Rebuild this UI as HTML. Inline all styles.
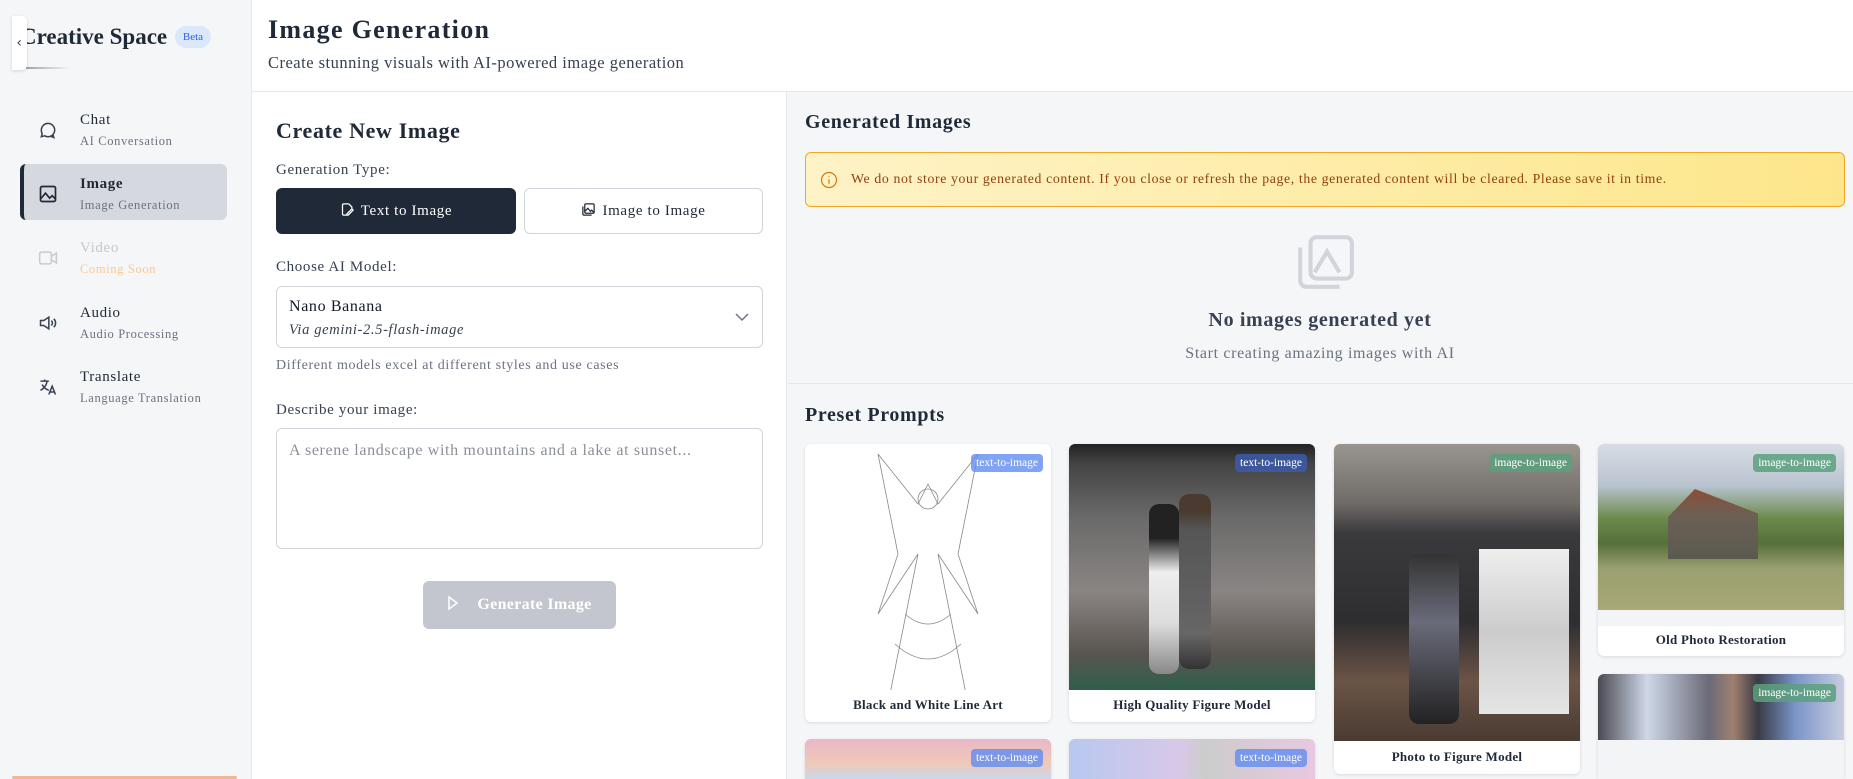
<!DOCTYPE html>
<html style="width:1853px;height:779px;overflow:hidden"><head><meta charset="utf-8"><style>
*{box-sizing:border-box;margin:0;padding:0}
body{width:1853px;height:779px;overflow:hidden;background:#f5f6f8;font-family:"Liberation Serif",Georgia,serif;color:#1f2937;position:relative;letter-spacing:.04em}
.abs{position:absolute}
#side{left:0;top:0;width:252px;height:779px;background:#f5f6f8;border-right:1px solid #e5e7eb}
#hdr{left:252px;top:0;width:1601px;height:92px;background:#fff;border-bottom:1px solid #e5e7eb}
#left{left:252px;top:92px;width:535px;height:687px;background:#fff;border-right:1px solid #e5e7eb}
.nav{position:absolute;left:0;width:252px}
.nav .t{position:absolute;left:80px;font-size:15px;color:#1f2937}
.nav .s{position:absolute;left:80px;font-size:12.5px;color:#6b7280}
.nav svg{position:absolute;left:38px}
.lbl{position:absolute;left:276px;font-size:15px;color:#374151}
.card{position:absolute;background:#fff;border-radius:6px;box-shadow:0 1px 3px rgba(0,0,0,.12);overflow:hidden;width:246px}
.card .img{position:absolute;left:0;top:0;width:246px}
.card .ct{position:absolute;left:0;width:246px;text-align:center;font-weight:bold;font-size:13px;color:#1f2937;letter-spacing:.02em}
.badge{position:absolute;right:8px;top:10px;font-size:11.5px;color:#fff;padding:3px 5px;border-radius:4px;letter-spacing:0}
.b1{background:rgba(96,140,240,.8)}.b2{background:rgba(90,160,125,.85)}
</style></head><body>
<div id="side" class="abs">
  <div class="abs" style="left:20px;top:24px;font-size:23px;font-weight:bold;color:#1f2937;letter-spacing:0">Creative Space</div>
  <div class="abs" style="left:175px;top:26px;width:36px;height:22px;border-radius:11px;background:#dbe7fd;color:#2563eb;font-size:11px;text-align:center;line-height:22px;letter-spacing:0">Beta</div>
  <div class="abs" style="left:26px;top:67px;width:45px;height:2px;background:linear-gradient(90deg,#9ca3af,transparent)"></div>
  <div class="abs" style="left:12px;top:16px;width:15px;height:54px;background:#fff;border-radius:0 5px 5px 0;box-shadow:0 1px 3px rgba(0,0,0,.15);font-size:14px;color:#374151;line-height:54px;text-align:center;font-family:'DejaVu Sans'">‹</div>

  <div class="nav" style="top:112px">
    <svg width="20" height="20" viewBox="0 0 24 24" fill="none" stroke="#374151" stroke-width="1.8" style="top:8px"><path d="M4 12a8 8 0 1 1 4 7l-4 1 1-3.5A8 8 0 0 1 4 12z"/><path d="M15 19.5l4 1.5-1-3"/></svg>
    <div class="t" style="top:0">Chat</div><div class="s" style="top:22px">AI Conversation</div>
  </div>
  <div class="abs" style="left:20px;top:164px;width:207px;height:56px;background:#d5d8de;border-radius:6px;border-left:4px solid #1f2937"></div>
  <div class="nav" style="top:176px">
    <svg width="20" height="20" viewBox="0 0 24 24" fill="none" stroke="#1f2937" stroke-width="2" style="top:8px"><rect x="3" y="3" width="18" height="18" rx="2"/><path d="M3 18l6-7 5 6 3-3 4 4"/></svg>
    <div class="t" style="top:0;font-weight:bold">Image</div><div class="s" style="top:22px">Image Generation</div>
  </div>
  <div class="nav" style="top:240px">
    <svg width="20" height="20" viewBox="0 0 24 24" fill="none" stroke="#c7cbd2" stroke-width="1.8" style="top:8px"><rect x="2" y="5" width="14" height="14" rx="2"/><path d="M16 10l6-4v12l-6-4"/></svg>
    <div class="t" style="top:0;color:#c4c8cf">Video</div><div class="s" style="top:22px;color:#fbc892">Coming Soon</div>
  </div>
  <div class="nav" style="top:305px">
    <svg width="20" height="20" viewBox="0 0 24 24" fill="none" stroke="#374151" stroke-width="1.8" style="top:8px"><path d="M3 9h4l6-4v14l-6-4H3z"/><path d="M16 9a4 4 0 0 1 0 6M19 7a7 7 0 0 1 0 10"/></svg>
    <div class="t" style="top:0">Audio</div><div class="s" style="top:22px">Audio Processing</div>
  </div>
  <div class="nav" style="top:369px">
    <svg width="20" height="20" viewBox="0 0 24 24" fill="none" stroke="#374151" stroke-width="1.8" style="top:8px"><path d="M3 5h10M8 3v2M5 9c2 4 5 6 8 7M11 5c-1 5-4 9-8 11M13 21l4-10 4 10M14.5 18h5"/></svg>
    <div class="t" style="top:0">Translate</div><div class="s" style="top:22px">Language Translation</div>
  </div>
  <div class="abs" style="left:12px;top:776px;width:225px;height:3px;background:#f0b892;border-radius:2px"></div>
</div>

<div id="hdr" class="abs">
  <div class="abs" style="left:16px;top:15px;font-size:26px;font-weight:bold;color:#1f2937;letter-spacing:.05em">Image Generation</div>
  <div class="abs" style="left:16px;top:53px;font-size:16.5px;color:#374151;letter-spacing:.03em">Create stunning visuals with AI-powered image generation</div>
</div>

<div id="left" class="abs">
  <div class="abs" style="left:24px;top:26px;font-size:22px;font-weight:bold;color:#1f2937">Create New Image</div>
</div>
<div class="lbl" style="top:162px">Generation Type:</div>
<div class="abs" style="left:276px;top:188px;width:240px;height:46px;background:#1f2937;border-radius:6px;color:#fff;font-size:15px;text-align:center;line-height:46px">
 <svg width="15" height="15" viewBox="0 0 24 24" fill="none" stroke="#fff" stroke-width="2" style="vertical-align:-2px;margin-right:6px"><path d="M14 3H6a2 2 0 0 0-2 2v14a2 2 0 0 0 2 2h4M14 3l5 5v3M13 21l8-8-2-2-8 8v2z"/></svg>Text to Image</div>
<div class="abs" style="left:524px;top:188px;width:239px;height:46px;background:#fff;border:1px solid #d1d5db;border-radius:6px;color:#1f2937;font-size:15px;text-align:center;line-height:44px">
 <svg width="15" height="15" viewBox="0 0 24 24" fill="none" stroke="#1f2937" stroke-width="2" style="vertical-align:-2px;margin-right:6px"><rect x="6" y="3" width="15" height="15" rx="2"/><path d="M3 7v12a2 2 0 0 0 2 2h12M6 15l5-5 4 5 2-2 4 4"/></svg>Image to Image</div>
<div class="lbl" style="top:259px">Choose AI Model:</div>
<div class="abs" style="left:276px;top:286px;width:487px;height:62px;background:#fff;border:1px solid #d1d5db;border-radius:6px">
  <div class="abs" style="left:12px;top:11px;font-size:16px;color:#111827">Nano Banana</div>
  <div class="abs" style="left:12px;top:35px;font-size:14.5px;font-style:italic;color:#374151">Via gemini-2.5-flash-image</div>
  <svg class="abs" style="left:457px;top:24px" width="16" height="12" viewBox="0 0 16 12" fill="none" stroke="#6b7280" stroke-width="1.5"><path d="M2 3l6 6 6-6"/></svg>
</div>
<div class="lbl" style="top:358px;font-size:14px;color:#6b7280">Different models excel at different styles and use cases</div>
<div class="lbl" style="top:402px">Describe your image:</div>
<div class="abs" style="left:276px;top:428px;width:487px;height:121px;background:#fff;border:1px solid #d1d5db;border-radius:6px">
  <div class="abs" style="left:12px;top:13px;font-size:16px;color:#8b8f97">A serene landscape with mountains and a lake at sunset...</div>
</div>
<div class="abs" style="left:423px;top:581px;width:193px;height:48px;background:#c3c6ce;border-radius:6px;color:#fff;font-size:16px;font-weight:bold;line-height:48px;text-align:center;letter-spacing:.02em">
 <svg width="12" height="16" viewBox="0 0 12 16" fill="none" stroke="#fff" stroke-width="1.5" style="vertical-align:-2px;margin-right:18px"><path d="M2 2l8 6-8 6z"/></svg>Generate Image</div>

<!-- right -->
<div class="abs" style="left:805px;top:111px;font-size:20px;font-weight:bold;color:#1f2937">Generated Images</div>
<div class="abs" style="left:805px;top:152px;width:1040px;height:55px;border:1px solid #f5a524;border-radius:6px;background:linear-gradient(90deg,#fef3c7,#fde68a)">
  <svg class="abs" style="left:14px;top:18px" width="18" height="18" viewBox="0 0 24 24" fill="none" stroke="#d97706" stroke-width="1.6"><circle cx="12" cy="12" r="10"/><path d="M12 11v6M12 7v1"/></svg>
  <div class="abs" style="left:45px;top:18px;font-size:13.8px;color:#92400e;letter-spacing:.045em">We do not store your generated content. If you close or refresh the page, the generated content will be cleared. Please save it in time.</div>
</div>
<svg class="abs" style="left:1294px;top:233px" width="62" height="58" viewBox="0 0 30 28" fill="none" stroke="#d1d5db" stroke-width="2"><rect x="8" y="2" width="20" height="20" rx="3"/><path d="M3 7v16a3 3 0 0 0 3 3h16M10 19l6-10 6 10"/></svg>
<div class="abs" style="left:787px;top:309px;width:1066px;text-align:center;font-size:20px;font-weight:bold;color:#374151">No images generated yet</div>
<div class="abs" style="left:787px;top:345px;width:1066px;text-align:center;font-size:16px;color:#6b7280">Start creating amazing images with AI</div>
<div class="abs" style="left:788px;top:383px;width:1065px;height:1px;background:#e5e7eb"></div>
<div class="abs" style="left:805px;top:404px;font-size:20px;font-weight:bold;color:#1f2937">Preset Prompts</div>

<div class="card" style="left:805px;top:444px;height:278px">
  <div class="img" style="height:246px;background:#fff">
    <svg width="246" height="246" viewBox="0 0 246 246" fill="none" stroke="#888" stroke-width=".8"><path d="M123 40l-10 20-40-50 20 100-20 60 40-60-30 150h80l-30-150 40 60-20-60 20-100-40 50z"/><path d="M90 200q33 30 66 0M100 170q23 20 46 0"/><circle cx="123" cy="55" r="10"/></svg>
  </div>
  <div class="badge b1">text-to-image</div>
  <div class="ct" style="top:253px">Black and White Line Art</div>
</div>
<div class="card" style="left:1069px;top:444px;height:278px">
  <div class="img" style="height:246px;background:linear-gradient(180deg,#222 0,#444 8%,#6a6a6a 30%,#8a8583 60%,#5a5550 85%,#2d5f4a 100%)">
    <div class="abs" style="left:80px;top:60px;width:30px;height:170px;background:linear-gradient(#222 20%,#eee 40%,#ddd 70%,#888);border-radius:10px"></div>
    <div class="abs" style="left:110px;top:50px;width:32px;height:175px;background:linear-gradient(#4a3a30 10%,#555 20%,#666 80%,#333);border-radius:10px"></div>
  </div>
  <div class="badge" style="background:rgba(60,90,170,.85)">text-to-image</div>
  <div class="ct" style="top:253px">High Quality Figure Model</div>
</div>
<div class="card" style="left:1334px;top:444px;height:330px">
  <div class="img" style="height:297px;background:linear-gradient(180deg,#9a958f 0,#6f6b67 20%,#3a3a3d 30%,#2e2e31 60%,#6b5446 80%,#4a3b31 100%)">
    <div class="abs" style="left:75px;top:110px;width:50px;height:170px;background:linear-gradient(#333,#6a6b7a 40%,#222);border-radius:10px"></div>
    <div class="abs" style="left:145px;top:105px;width:90px;height:165px;background:linear-gradient(#eee,#ccc 50%,#e5e5e5);"></div>
  </div>
  <div class="badge b2">image-to-image</div>
  <div class="ct" style="top:305px">Photo to Figure Model</div>
</div>
<div class="card" style="left:1598px;top:444px;height:212px">
  <div class="img" style="height:166px;background:linear-gradient(180deg,#d8dde4 0,#b9c3cf 25%,#6b8a4a 45%,#55703a 60%,#9aa070 75%,#a8a878 100%)">
    <div class="abs" style="left:70px;top:45px;width:90px;height:70px;background:linear-gradient(#8a4e3a,#6b6055 40%,#5b5a50);clip-path:polygon(30% 0,100% 35%,100% 100%,0 100%,0 40%)"></div>
  </div>
  <div class="abs" style="left:0;top:166px;width:246px;height:16px;background:#f3f4f6"></div>
  <div class="badge b2">image-to-image</div>
  <div class="ct" style="top:188px">Old Photo Restoration</div>
</div>
<div class="card" style="left:1598px;top:674px;height:105px;background:#f3f4f6;border-radius:6px 6px 0 0">
  <div class="img" style="height:66px;background:linear-gradient(90deg,#4a4a52 0,#cfd8e8 20%,#6a6a78 45%,#a08070 55%,#3a3a45 65%,#7a94c8 80%,#c8cde0 100%)"></div>
  <div class="badge b2">image-to-image</div>
</div>
<div class="card" style="left:805px;top:739px;height:40px;border-radius:6px 6px 0 0">
  <div class="img" style="height:40px;background:linear-gradient(180deg,#e8b8c8,#f0c8b8 60%,#c8d8ec)"></div>
  <div class="badge b1">text-to-image</div>
</div>
<div class="card" style="left:1069px;top:739px;height:40px;border-radius:6px 6px 0 0">
  <div class="img" style="height:40px;background:linear-gradient(90deg,#b8c8f0,#d8c8e8 45%,#ccc 55%,#e8c8e0)"></div>
  <div class="badge b1">text-to-image</div>
</div>
</body></html>
